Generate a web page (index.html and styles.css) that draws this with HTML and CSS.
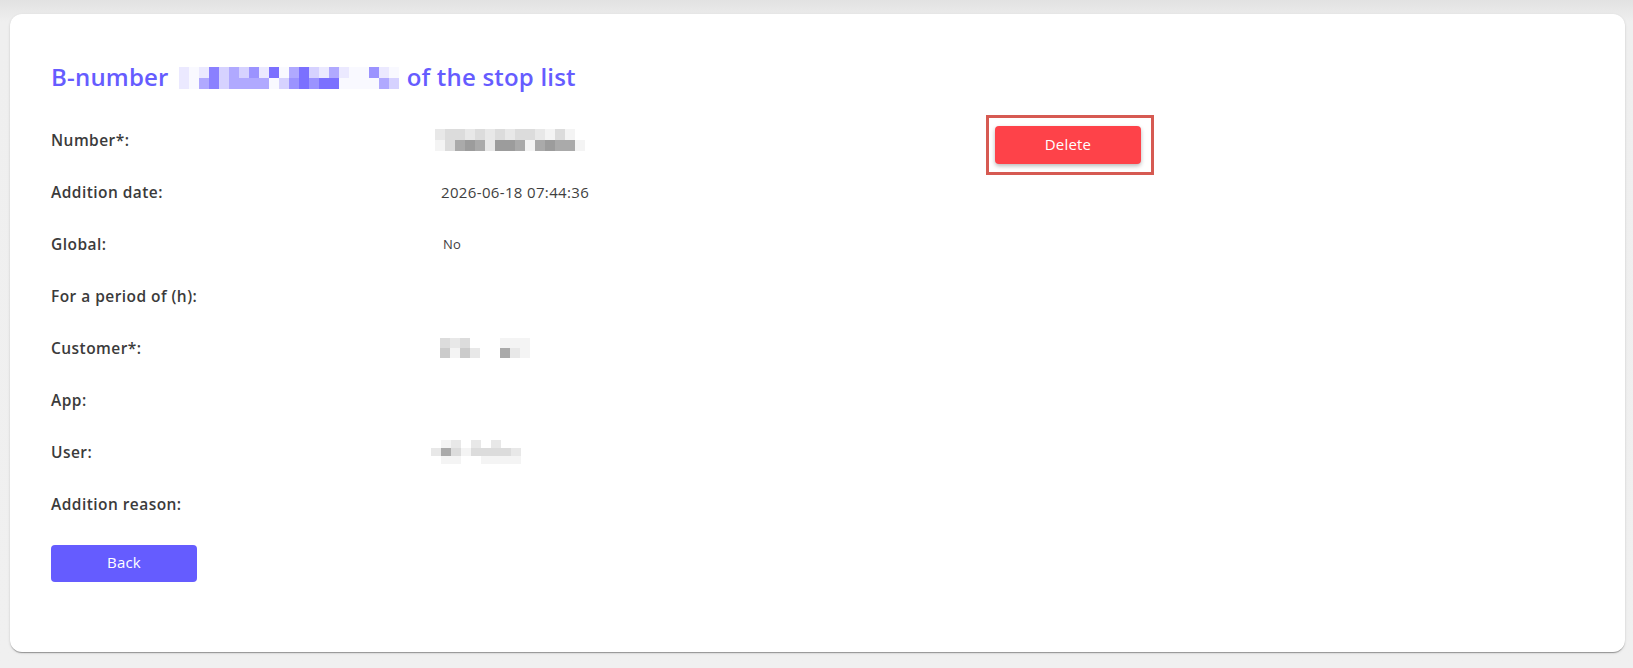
FILE: index.html
```html
<!DOCTYPE html>
<html lang="en">
<head>
<meta charset="utf-8">
<title>B-number of the stop list</title>
<link rel="stylesheet" href="styles.css">
</head>
<body>
<main class="card">
  <h1 class="title">B-number
    <span class="mosaic mosaic-title">
      <i class="v1"></i><i class="v0"></i><i class="v1"></i><i class="v5"></i><i class="v2"></i><i class="v3"></i><i class="v2"></i><i class="v4"></i><i class="v1"></i><i class="v6"></i><i class="v0"></i><i class="v3"></i><i class="v6"></i><i class="v2"></i><i class="v1"></i><i class="v3"></i><i class="v1"></i><i class="v0"></i><i class="v0"></i><i class="v4"></i><i class="v1"></i><i class="v0"></i>
      <i class="v1"></i><i class="v0"></i><i class="v3"></i><i class="v5"></i><i class="v2"></i><i class="v3"></i><i class="v3"></i><i class="v3"></i><i class="v3"></i><i class="v0"></i><i class="v2"></i><i class="v4"></i><i class="v6"></i><i class="v4"></i><i class="v6"></i><i class="v6"></i><i class="v0"></i><i class="v0"></i><i class="v0"></i><i class="v0"></i><i class="v3"></i><i class="v2"></i>
    </span>
    of the stop list</h1>

  <div class="layout">
    <dl class="details">
      <div class="row">
        <dt>Number*:</dt>
        <dd>
          <span class="mosaic mosaic-number">
            <i class="g1"></i><i class="g2"></i><i class="g2"></i><i class="g1"></i><i class="g2"></i><i class="g1"></i><i class="g2"></i><i class="g1"></i><i class="g2"></i><i class="g2"></i><i class="g1"></i><i class="g0"></i><i class="g2"></i><i class="g0"></i><i class="w"></i>
            <i class="g0"></i><i class="g2"></i><i class="g4"></i><i class="g5"></i><i class="g4"></i><i class="g1"></i><i class="g5"></i><i class="g5"></i><i class="g4"></i><i class="g0"></i><i class="g4"></i><i class="g5"></i><i class="g4"></i><i class="g4"></i><i class="g0"></i>
          </span>
        </dd>
      </div>
      <div class="row">
        <dt>Addition date:</dt>
        <dd class="text">2026-06-18 07:44:36</dd>
      </div>
      <div class="row">
        <dt>Global:</dt>
        <dd class="text small">No</dd>
      </div>
      <div class="row">
        <dt>For a period of (h):</dt>
        <dd></dd>
      </div>
      <div class="row">
        <dt>Customer*:</dt>
        <dd>
          <span class="mosaic mosaic-customer">
            <i class="g2"></i><i class="g1"></i><i class="g2"></i><i class="w"></i><i class="w"></i><i class="w"></i><i class="g0"></i><i class="g0"></i><i class="g0"></i>
            <i class="g3"></i><i class="g0"></i><i class="g3"></i><i class="g1"></i><i class="w"></i><i class="w"></i><i class="g4"></i><i class="g1"></i><i class="g0"></i>
          </span>
        </dd>
      </div>
      <div class="row">
        <dt>App:</dt>
        <dd></dd>
      </div>
      <div class="row">
        <dt>User:</dt>
        <dd>
          <span class="mosaic mosaic-user">
            <i class="w"></i><i class="g0"></i><i class="g1"></i><i class="w"></i><i class="g1"></i><i class="w"></i><i class="g1"></i><i class="w"></i><i class="w"></i>
            <i class="g1"></i><i class="g4"></i><i class="g2"></i><i class="g0"></i><i class="g2"></i><i class="g2"></i><i class="g2"></i><i class="g2"></i><i class="g1"></i>
            <i class="w"></i><i class="g0"></i><i class="g0"></i><i class="w"></i><i class="w"></i><i class="g0"></i><i class="g0"></i><i class="g0"></i><i class="g0"></i>
          </span>
        </dd>
      </div>
      <div class="row">
        <dt>Addition reason:</dt>
        <dd></dd>
      </div>
    </dl>

    <div class="actions">
      <button class="btn btn-delete" type="button">Delete</button>
    </div>
  </div>

  <button class="btn btn-back" type="button">Back</button>
</main>
</body>
</html>
```

FILE: styles.css
```css
* {
  box-sizing: border-box;
}

html,
body {
  margin: 0;
  height: 100%;
}

body {
  background: linear-gradient(#e2e2e2, #efefef 22px, #f0f0f0);
  font-family: "Open Sans", "Liberation Sans", sans-serif;
  color: #3a3a3a;
  padding: 14px 8px 16px 10px;
}

.card {
  background: #fff;
  border-radius: 12px;
  box-shadow: 0 2px 1px -1px rgba(0, 0, 0, 0.22), 0 1px 1px rgba(0, 0, 0, 0.14), 0 1px 3px rgba(0, 0, 0, 0.12);
  padding: 48px 41px 70px;
  height: 638px;
}

.title {
  margin: 0;
  font-size: 24px;
  line-height: 30px;
  font-weight: 600;
  letter-spacing: 0.2px;
  color: #665cff;
  display: flex;
  align-items: center;
  gap: 8px;
}

.layout {
  display: flex;
  align-items: flex-start;
  margin-top: 22px;
}

.details {
  margin: 0;
  width: 935px;
}

.row {
  display: flex;
  align-items: center;
  height: 52px;
}

.row dt {
  width: 390px;
  font-size: 15.5px;
  font-weight: 600;
  letter-spacing: 0.45px;
  color: #3b3b3b;
}

.row dd {
  margin: 0;
  display: flex;
  align-items: center;
}

.text {
  font-size: 15px;
  letter-spacing: 0.35px;
  color: #3f3f3f;
}

.text.small {
  font-size: 13px;
  letter-spacing: 0.2px;
  margin-left: 2px;
}

/* Pixelated placeholder blocks for hidden values */
.mosaic {
  display: inline-grid;
}

.mosaic i {
  display: block;
}

.mosaic-title {
  grid-template-columns: repeat(22, 10px);
  grid-auto-rows: 11px;
  margin: 2px 0 0 2px;
}

.mosaic-number {
  grid-template-columns: repeat(15, 10px);
  grid-auto-rows: 11px;
  margin-left: -6px;
}

.mosaic-customer {
  grid-template-columns: repeat(9, 10px);
  grid-auto-rows: 10px;
  margin-left: -1px;
}

.mosaic-user {
  grid-template-columns: repeat(9, 10px);
  grid-auto-rows: 8px;
  margin-left: -10px;
}

.v0 { background: #f9f9ff; }
.v1 { background: #ebe9ff; }
.v2 { background: #d6d2ff; }
.v3 { background: #b0a9ff; }
.v4 { background: #9b93ff; }
.v5 { background: #8a80ff; }
.v6 { background: #7b70ff; }

.w { background: #fff; }
.g0 { background: #f4f4f4; }
.g1 { background: #e8e8e8; }
.g2 { background: #dcdcdc; }
.g3 { background: #cbcbcb; }
.g4 { background: #aaaaaa; }
.g5 { background: #9c9c9c; }

.actions {
  margin-top: 1px;
  border: 3px solid #d65a52;
  padding: 8px 10px 8px 6px;
}

.btn {
  display: block;
  width: 146px;
  border: 0;
  border-radius: 4px;
  padding: 0 0 3px;
  color: #fff;
  font-family: "Open Sans", "Liberation Sans", sans-serif;
  font-size: 15px;
  letter-spacing: 0.2px;
  cursor: pointer;
}

.btn-delete {
  height: 38px;
  background: #fe4249;
  box-shadow: 0 2px 4px rgba(0, 0, 0, 0.28);
}

.btn-back {
  height: 37px;
  margin-top: 15px;
  background: #655cff;
}
```
